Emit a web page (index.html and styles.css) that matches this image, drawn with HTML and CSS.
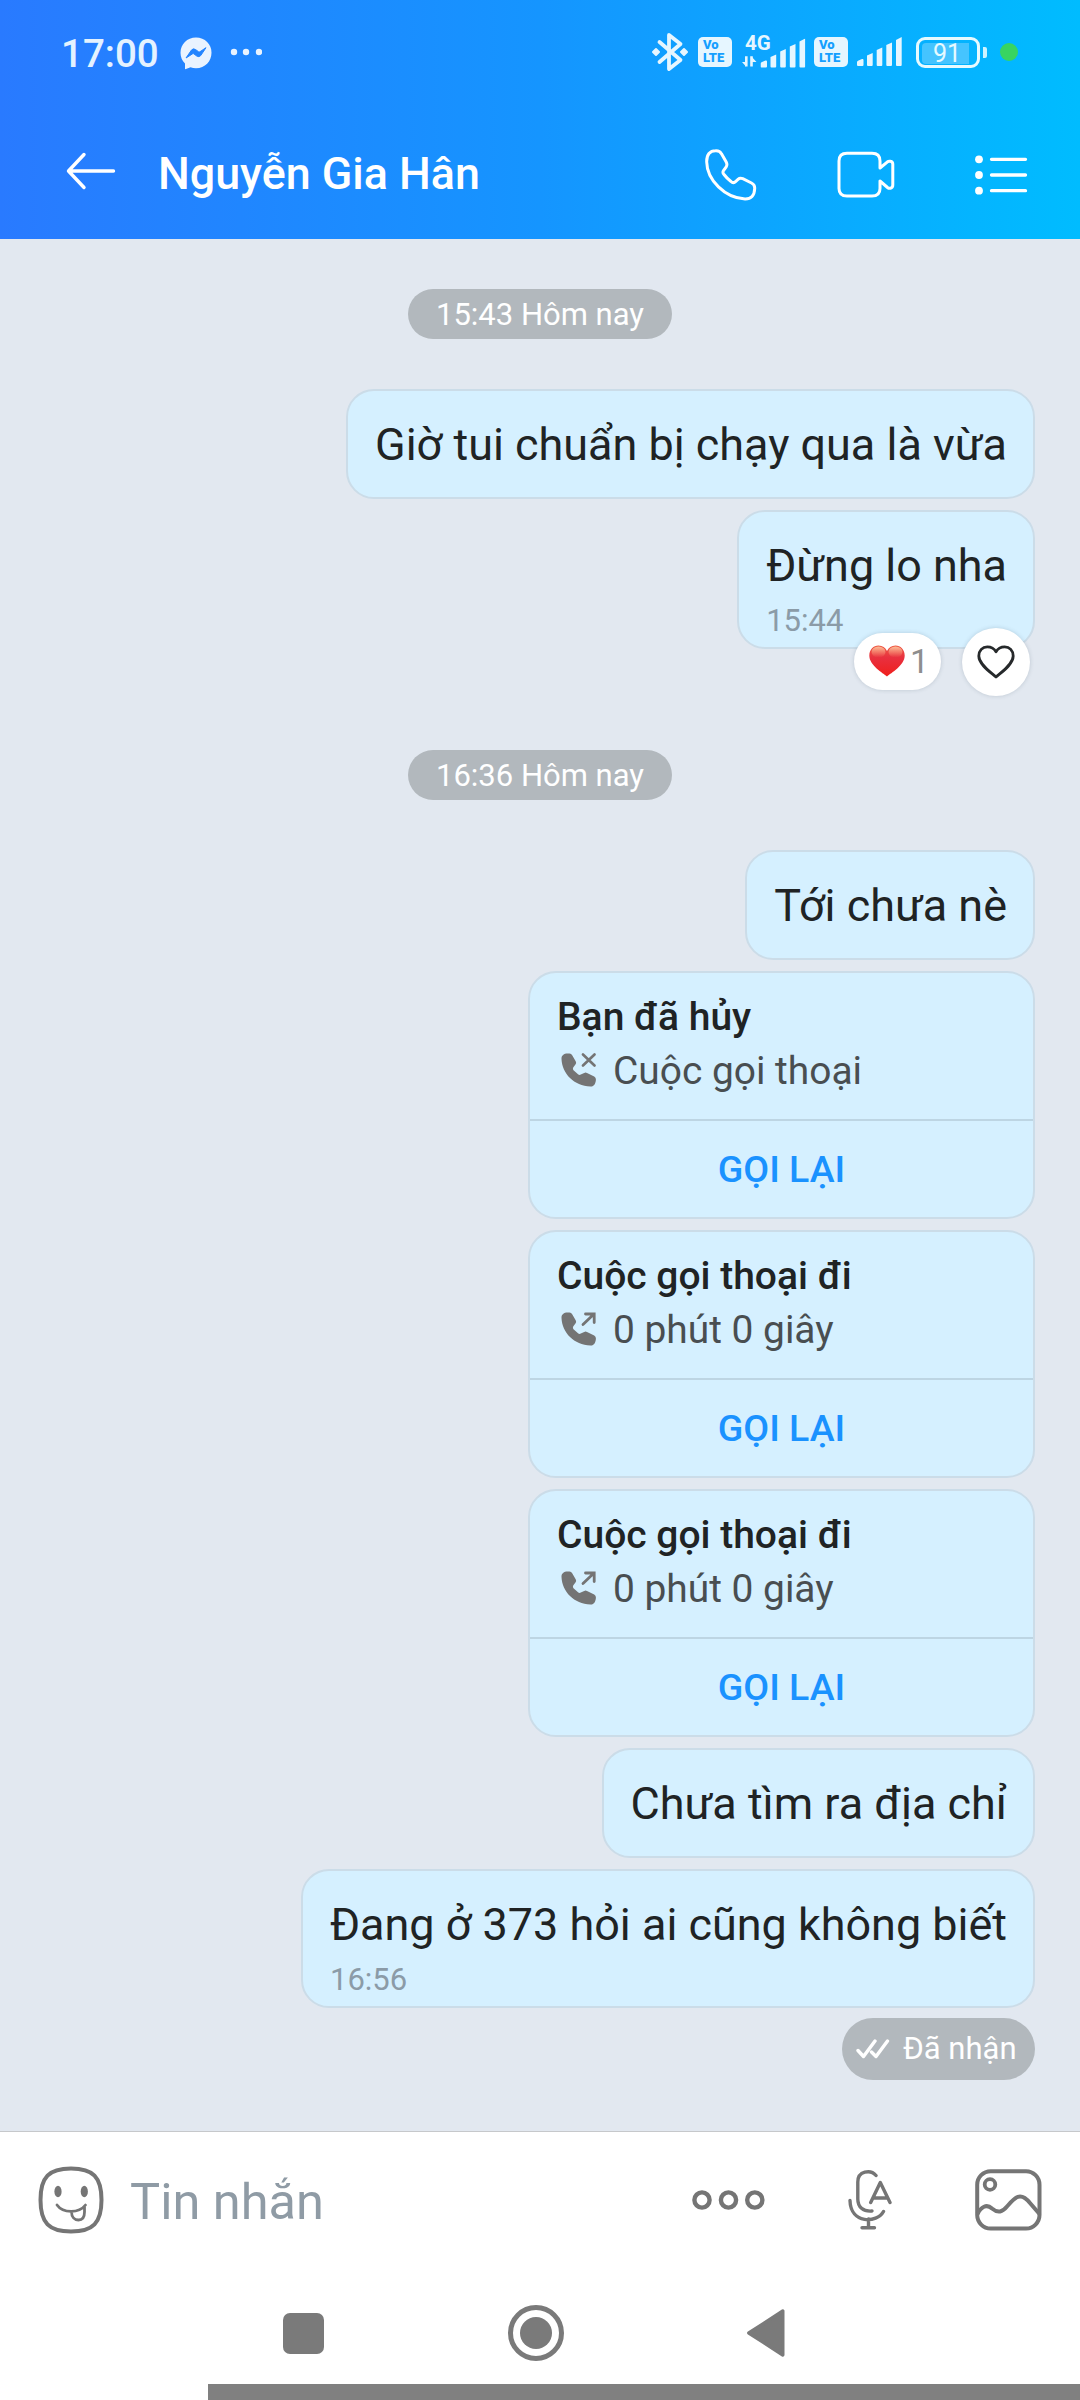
FILE: index.html
```html
<!DOCTYPE html>
<html lang="vi">
<head>
<meta charset="utf-8">
<title>Nguyễn Gia Hân</title>
<link rel="stylesheet" href="styles.css">
</head>
<body>
<svg class="defs" width="0" height="0">
  <symbol id="handset" viewBox="0 0 36 34">
    <path d="M0.5 6C0.3 2.500 3 0.600 6.500 0.600H8.500Q10.300 0.600 11.200 2.200L14.800 8.500Q15.600 10 14.600 11.300L12.200 14.500Q11.400 16 12.500 17.200L17 21.200Q18.300 22.400 19.800 21.600L23.200 19.900Q24.600 19.200 26 19.900L33.200 23.600Q34.900 24.500 34.900 26.300C34.900 30.500 33 33.800 29.500 33.600C13 32.600 1.200 21 0.500 6Z" fill="#747474"/>
  </symbol>
  <symbol id="bars" viewBox="0 0 45 30">
    <path d="M0 28V25Q0 24 1.500 23.500L5 22Q6.500 21.600 6.500 23V28Q6.500 29 5.500 29H1Q0 29 0 28ZM10 18.500 15.700 16V28Q15.700 29 14.700 29H11Q10 29 10 28ZM19.700 13 25.300 10.500V28Q25.300 29 24.300 29H20.700Q19.700 29 19.700 28ZM29.300 8 35 5.500V28Q35 29 34 29H30.300Q29.300 29 29.300 28ZM39 3 44.700 0V28Q44.700 29 43.700 29H40Q39 29 39 28Z" fill="#e6f6ff"/>
  </symbol>
</svg>

<header class="top">
  <div class="status">
    <span class="clock">17:00</span>
    <svg class="messenger" width="32" height="33" viewBox="0 0 32 33">
      <path d="M16 0.500C7 0.500 0.500 7.200 0.500 15.700C0.500 20 2.200 23.700 5 26.500V31.500Q5 32.500 6 32L10.500 30.300C12.200 30.800 14 31.200 16 31.200C25 31.200 31.500 24.200 31.500 15.700S25 0.500 16 0.500Z" fill="#e9f3ff"/>
      <path d="M6 21 11.500 13Q13.300 11 15.500 12.500L18.500 14.700Q19.200 15.200 20 14.700L26 10.700 20.700 18.600Q19 20.500 16.700 19L13.800 16.800Q13.200 16.400 12.400 16.900Z" fill="#2284ff" stroke="#2284ff" stroke-linejoin="round"/>
    </svg>
    <svg class="more" width="32" height="8" viewBox="0 0 32 8"><g fill="#e9f3ff"><circle cx="4" cy="4" r="3.200"/><circle cx="16" cy="4" r="3.200"/><circle cx="29" cy="4" r="3.200"/></g></svg>
    <svg class="bt" width="36" height="40" viewBox="0 0 36 40">
      <path d="M7.500 10 28.500 28 17 37V3L28.500 12 7.500 30" fill="none" stroke="#e6f6ff" stroke-width="3.800" stroke-linecap="round" stroke-linejoin="round"/>
      <path d="M1 20 4 17 7 20 4 23ZM29 20 32 17 35 20 32 23Z" fill="#e6f6ff" stroke="#e6f6ff" stroke-width="2" stroke-linejoin="round"/>
    </svg>
    <div class="volte first"><span>Vo</span><span>LTE</span></div>
    <div class="net">
      <svg width="64" height="36" viewBox="0 0 64 36">
        <path d="M4.300 23.200V33.500M9.500 23.200V33.500" stroke="#e6f6ff" stroke-width="2.600"/>
        <path d="M0 29H4V33.500ZM9.500 23.500 14.500 29H9.500Z" fill="#e6f6ff"/>
        <use href="#bars" x="18.500" y="5.500" width="45" height="30"/>
      </svg>
      <span class="generation">4G</span>
    </div>
    <div class="volte second"><span>Vo</span><span>LTE</span></div>
    <svg class="bars" width="45" height="30"><use href="#bars"/></svg>
    <div class="battery"><span class="charge"></span><span class="percent">91</span></div>
    <span class="tip"></span>
    <span class="live"></span>
  </div>
  <div class="toolbar">
    <svg class="back" width="50" height="38" viewBox="0 0 50 38"><path d="M18 2.500 2.500 19 18 35.500M3 19H47.500" fill="none" stroke="#fff" stroke-width="3.400" stroke-linecap="round" stroke-linejoin="round"/></svg>
    <h1 class="name">Nguyễn Gia Hân</h1>
    <svg class="call" width="52" height="52" viewBox="0 0 52 52"><path d="M1.700 13C1.500 5.500 5 1.700 10.500 1.700C14 1.500 15.500 2.800 16.500 4.800L21.200 13Q22.600 15.800 21.200 17.800L18.500 21.500Q17.200 23.500 19 25.500Q22 29.500 26 32.500Q28 34.500 30 33L33 30.300Q35 28.500 37.800 29.700L46.500 34Q50 35.800 49.700 39.500C49.500 46.500 46 50.200 40 50C20 49 2 31 1.700 13Z" fill="none" stroke="#fff" stroke-width="3"/></svg>
    <svg class="video" width="58" height="48" viewBox="0 0 58 48"><path d="M10 2.200H35Q43 2.200 43 10V17L50.500 10.800Q51.800 9.800 53.500 10.300Q55.800 10.800 55.800 13V34Q55.800 36.500 53.500 37.200Q52 37.700 50.500 36.500L43 30V37.500Q43 45 35 45H10Q2 45 2 37.500V10Q2 2.200 10 2.200Z" fill="none" stroke="#fff" stroke-width="3" stroke-linejoin="round"/></svg>
    <svg class="list" width="54" height="40" viewBox="0 0 54 40"><g fill="#fff"><circle cx="4" cy="4.300" r="3.900"/><circle cx="4" cy="20" r="3.900"/><circle cx="4" cy="35.700" r="3.900"/></g><path d="M16.500 4.300H50.500M16.500 20H50.500M16.500 35.700H50.500" stroke="#fff" stroke-width="3.300" stroke-linecap="round"/></svg>
  </div>
</header>

<main class="chat">
  <div class="stamp">15:43 Hôm nay</div>
  <div class="bubble">Giờ tui chuẩn bị chạy qua là vừa</div>
  <div class="bubble timed">Đừng lo nha<span class="time">15:44</span>
    <div class="reactions">
      <div class="count">
        <svg width="36" height="32" viewBox="0 0 36 32">
          <defs>
            <linearGradient id="red" x1="0" y1="0" x2="0" y2="1"><stop offset="0" stop-color="#ee5a44"/><stop offset=".4" stop-color="#e8303f"/><stop offset="1" stop-color="#f01f1c"/></linearGradient>
            <linearGradient id="gloss" x1="0" y1="0" x2="0" y2="1"><stop offset="0" stop-color="#ffd0a8" stop-opacity=".85"/><stop offset="1" stop-color="#ffb090" stop-opacity="0"/></linearGradient>
          </defs>
          <path d="M18 31.500C14 28 0.300 20.500 0.300 10.500C0.300 4.500 4.500 0.500 9.500 0.500C13.500 0.500 16.500 2.700 18 6C19.500 2.700 22.500 0.500 26.500 0.500C31.500 0.500 35.700 4.500 35.700 10.500C35.700 20.500 22 28 18 31.500Z" fill="url(#red)"/>
          <ellipse cx="9.500" cy="7" rx="7" ry="5.500" fill="url(#gloss)"/><ellipse cx="26.500" cy="7" rx="7" ry="5.500" fill="url(#gloss)"/>
        </svg>
        <span>1</span>
      </div>
      <div class="like">
        <svg width="38" height="34" viewBox="0 0 38 34"><path d="M19 32C14 27.500 1.800 19.500 1.800 11C1.800 5.500 5.500 1.900 10.300 1.900C14.300 1.900 17.300 3.800 19 6.800C20.700 3.800 23.700 1.900 27.700 1.900C32.500 1.900 36.200 5.500 36.200 11C36.200 19.500 24 27.500 19 32Z" fill="none" stroke="#26292b" stroke-width="2.800" stroke-linejoin="round"/></svg>
      </div>
    </div>
  </div>
  <div class="stamp later">16:36 Hôm nay</div>
  <div class="bubble">Tới chưa nè</div>
  <section class="card">
    <div class="info">
      <div class="title">Bạn đã hủy</div>
      <div class="detail"><svg width="36" height="34" viewBox="0 0 36 34"><use href="#handset"/><path d="M22 1.500 33.500 12.500M33.500 1.500 22 12.500" stroke="#747474" stroke-width="2.600" stroke-linecap="round"/></svg>Cuộc gọi thoại</div>
    </div>
    <div class="again">GỌI LẠI</div>
  </section>
  <section class="card">
    <div class="info">
      <div class="title">Cuộc gọi thoại đi</div>
      <div class="detail"><svg width="36" height="34" viewBox="0 0 36 34"><use href="#handset"/><path d="M22 12.500 32.500 2.500M24.500 2H33.200V10.500" fill="none" stroke="#747474" stroke-width="2.800" stroke-linecap="round"/></svg>0 phút 0 giây</div>
    </div>
    <div class="again">GỌI LẠI</div>
  </section>
  <section class="card">
    <div class="info">
      <div class="title">Cuộc gọi thoại đi</div>
      <div class="detail"><svg width="36" height="34" viewBox="0 0 36 34"><use href="#handset"/><path d="M22 12.500 32.500 2.500M24.500 2H33.200V10.500" fill="none" stroke="#747474" stroke-width="2.800" stroke-linecap="round"/></svg>0 phút 0 giây</div>
    </div>
    <div class="again">GỌI LẠI</div>
  </section>
  <div class="bubble">Chưa tìm ra địa chỉ</div>
  <div class="bubble timed">Đang ở 373 hỏi ai cũng không biết<span class="time">16:56</span></div>
  <div class="received">
    <svg width="34" height="20" viewBox="0 0 34 20"><path d="M2 11.500 7.500 17.500 19 2M15.500 13 20 17.500 31.500 2" fill="none" stroke="#fff" stroke-width="3.400" stroke-linecap="round" stroke-linejoin="round"/></svg>
    Đã nhận
  </div>
</main>

<footer class="bottom">
  <div class="composer">
    <svg class="smile" width="66" height="68" viewBox="0 0 66 68">
      <path d="M33 2.500C55 2.500 63.500 11 63.500 34S55 65.500 33 65.500S2.500 57 2.500 34S11 2.500 33 2.500Z" fill="none" stroke="#757575" stroke-width="4"/>
      <ellipse cx="20" cy="25.500" rx="3.600" ry="5.800" fill="#757575"/><ellipse cx="46.300" cy="25.500" rx="3.600" ry="5.800" fill="#757575"/>
      <path d="M19 39C25 47.500 41 47.500 47.500 39M33.500 45.500C33.500 51 36.500 54 40.500 54S46.500 51 46.500 46V41" fill="none" stroke="#757575" stroke-width="2.800" stroke-linecap="round"/>
    </svg>
    <span class="placeholder">Tin nhắn</span>
    <svg class="dots" width="73" height="20" viewBox="0 0 73 20"><g fill="none" stroke="#757575" stroke-width="4.400"><circle cx="10" cy="10" r="7.600"/><circle cx="36.500" cy="10" r="7.600"/><circle cx="62.800" cy="10" r="7.600"/></g></svg>
    <svg class="mic" width="44" height="62" viewBox="0 0 44 62"><path d="M28 6.500C22.500 0 9.800 2 9.800 13V30C9.800 38 15 42.800 24 42M2 31.500C2.500 55 29 54.500 35.500 42.500M20.500 50V58.500M14 58.800H26.500M22.700 33.500 32.300 13.500 42 33.500M26 29H38.500" fill="none" stroke="#757575" stroke-width="3.400" stroke-linecap="round" stroke-linejoin="round"/></svg>
    <svg class="photo" width="67" height="62" viewBox="0 0 67 62"><rect x="2.200" y="2.200" width="62.300" height="57.300" rx="13.500" fill="none" stroke="#757575" stroke-width="4"/><circle cx="15" cy="15.500" r="5.300" fill="none" stroke="#757575" stroke-width="3.800"/><path d="M2.500 45C6 38 11.500 34.500 17 39.500C23 44.500 27.500 43 32 37.500C39 29.500 45 21.500 55 34L64.500 45" fill="none" stroke="#757575" stroke-width="4"/></svg>
  </div>
  <nav class="keys">
    <span class="recent"></span>
    <span class="home"></span>
    <svg class="prev" width="38" height="48" viewBox="0 0 38 48"><path d="M1.800 24 35.800 2V46Z" fill="#7a7a7a" stroke="#7a7a7a" stroke-width="3.400" stroke-linejoin="round"/></svg>
  </nav>
  <div class="strip"></div>
</footer>
</body>
</html>
```
FILE: styles.css
```css
* { box-sizing: border-box; }
body {
  margin: 0;
  width: 1080px;
  height: 2400px;
  display: flex;
  flex-direction: column;
  overflow: hidden;
  background: #e2e8f0;
  font-family: Roboto, "Noto Sans", sans-serif;
  color: #202324;
}
svg { display: block; flex: none; }
.defs { position: absolute; }

.top {
  height: 239px;
  flex: none;
  background: linear-gradient(90deg, #297aff 0%, #1595ff 50%, #00bcff 100%);
  color: #fff;
}
.status {
  height: 104px;
  display: flex;
  align-items: center;
  padding-left: 61px;
}
.clock {
  width: 119px;
  font-size: 38.500px;
  line-height: 46px;
  font-weight: 500;
  color: #e4f2ff;
  padding-top: 3px;
}
.messenger { margin-top: 2px; }
.more { margin-left: 18px; }
.bt { margin-left: 390px; }
.volte {
  width: 34px;
  height: 30px;
  display: flex;
  flex-direction: column;
  padding: 2px 0 0 5px;
  border-radius: 5px;
  background: #e6f6ff;
  color: #159fff;
  font-size: 13px;
  line-height: 12.500px;
  font-weight: 900;
}
.volte.first { margin-left: 10px; }
.net {
  display: grid;
  margin: -3px 0 0 10px;
}
.net > * { grid-area: 1 / 1; }
.generation {
  padding-left: 3px;
  font-size: 20.500px;
  line-height: 20px;
  font-weight: 700;
  color: #e6f6ff;
}
.volte.second { margin-left: 8px; }
.bars { margin-left: 9px; }
.battery {
  width: 64px;
  height: 31px;
  margin-left: 14px;
  border: 3px solid #e6faff;
  border-radius: 9px;
  padding: 2px 3px;
  display: grid;
  align-items: center;
}
.charge, .percent { grid-area: 1 / 1; }
.charge {
  width: 47px;
  height: 21px;
  border-radius: 4px 0 0 4px;
  background: #45c4ff;
}
.percent {
  font-size: 25px;
  line-height: 24px;
  padding-left: 11px;
  color: #e6faff;
}
.tip {
  width: 4px;
  height: 11px;
  margin-left: 3px;
  border-radius: 0 2px 2px 0;
  background: #cdf3ff;
}
.live {
  width: 18px;
  height: 18px;
  margin-left: 13px;
  border-radius: 50%;
  background: #38d461;
}
.toolbar {
  height: 135px;
  display: flex;
  align-items: flex-start;
  padding: 45px 51px 0 66px;
}
.back { margin-top: 3px; }
.name {
  flex: 1;
  margin: -1px 0 0 42px;
  font-size: 44.800px;
  line-height: 52px;
  font-weight: 500;
}
.video { margin: 2px 0 0 80px; }
.list { margin: 6px 0 0 80px; }

.chat {
  flex: 1;
  display: flex;
  flex-direction: column;
  align-items: flex-end;
  gap: 11px;
  padding: 50px 45px 0 0;
}
.stamp {
  align-self: center;
  width: 264px;
  height: 50px;
  margin: 0 -45px 39px 0;
  border-radius: 25px;
  background: #b2b8bd;
  color: #fff;
  font-size: 31px;
  line-height: 51px;
  text-align: center;
}
.stamp.later { margin-top: 90px; }
.bubble, .card {
  flex: none;
  border: 2px solid #cbdce8;
  border-radius: 28px;
  background: #d5f0ff;
}
.bubble {
  position: relative;
  padding: 27px 26px 26px 27px;
  font-size: 44.950px;
  line-height: 53px;
  white-space: nowrap;
}
.bubble.timed { padding-bottom: 8px; }
.time {
  display: block;
  margin-top: 11px;
  font-size: 31px;
  line-height: 36px;
  color: #8b9ba7;
}
.reactions {
  position: absolute;
  right: 3px;
  bottom: -49px;
  display: flex;
  align-items: center;
  gap: 21px;
}
.count, .like {
  display: flex;
  align-items: center;
  background: #fff;
  box-shadow: 0 0 4px rgba(60, 80, 100, .22);
}
.count {
  width: 87px;
  height: 57px;
  margin-top: -2px;
  border-radius: 29px;
  padding-left: 15px;
  gap: 5px;
  font-size: 34px;
  line-height: 40px;
  color: #8e8e8e;
}
.like {
  width: 68px;
  height: 68px;
  border-radius: 50%;
  justify-content: center;
}
.card {
  width: 507px;
  height: 248px;
}
.info {
  height: 148px;
  padding: 21px 0 0 27px;
  border-bottom: 2px solid #bdd5e3;
}
.title {
  font-size: 39px;
  line-height: 46px;
  font-weight: 500;
}
.detail {
  display: flex;
  align-items: center;
  gap: 16px;
  margin-top: 8px;
  padding-left: 4px;
  font-size: 38.900px;
  line-height: 46px;
  color: #494e51;
}
.detail svg { margin-top: -3px; }
.again {
  height: 96px;
  font-size: 37.500px;
  line-height: 97px;
  font-weight: 500;
  text-align: center;
  color: #1a92ff;
}
.received {
  display: flex;
  align-items: center;
  gap: 13px;
  width: 193px;
  height: 62px;
  margin-top: -1px;
  padding-left: 14px;
  border-radius: 31px;
  background: #b2b8bd;
  color: #fff;
  font-size: 31px;
  line-height: 36px;
  white-space: nowrap;
}

.bottom {
  height: 269px;
  flex: none;
  border-top: 1px solid #c6c8cb;
  background: #fff;
}
.composer {
  height: 136px;
  display: flex;
  align-items: center;
  padding-left: 38px;
}
.placeholder {
  flex: 1;
  margin-left: 26px;
  padding-top: 3px;
  font-size: 50.500px;
  line-height: 60px;
  color: #8f9ba5;
}
.mic { margin-left: 83px; }
.photo { margin: 0 38px 0 83px; }
.keys {
  height: 116px;
  display: flex;
  align-items: center;
  padding: 14px 0 0 283px;
}
.recent {
  width: 41px;
  height: 41px;
  border-radius: 7px;
  background: #7a7a7a;
}
.home {
  width: 56px;
  height: 56px;
  margin-left: 184px;
  border: 5px solid #7a7a7a;
  border-radius: 50%;
  padding: 7px;
  display: grid;
}
.home::before {
  content: "";
  border-radius: 50%;
  background: #7a7a7a;
}
.prev { margin-left: 183px; }
.strip {
  height: 16px;
  margin-left: 208px;
  background: #808080;
}
```
